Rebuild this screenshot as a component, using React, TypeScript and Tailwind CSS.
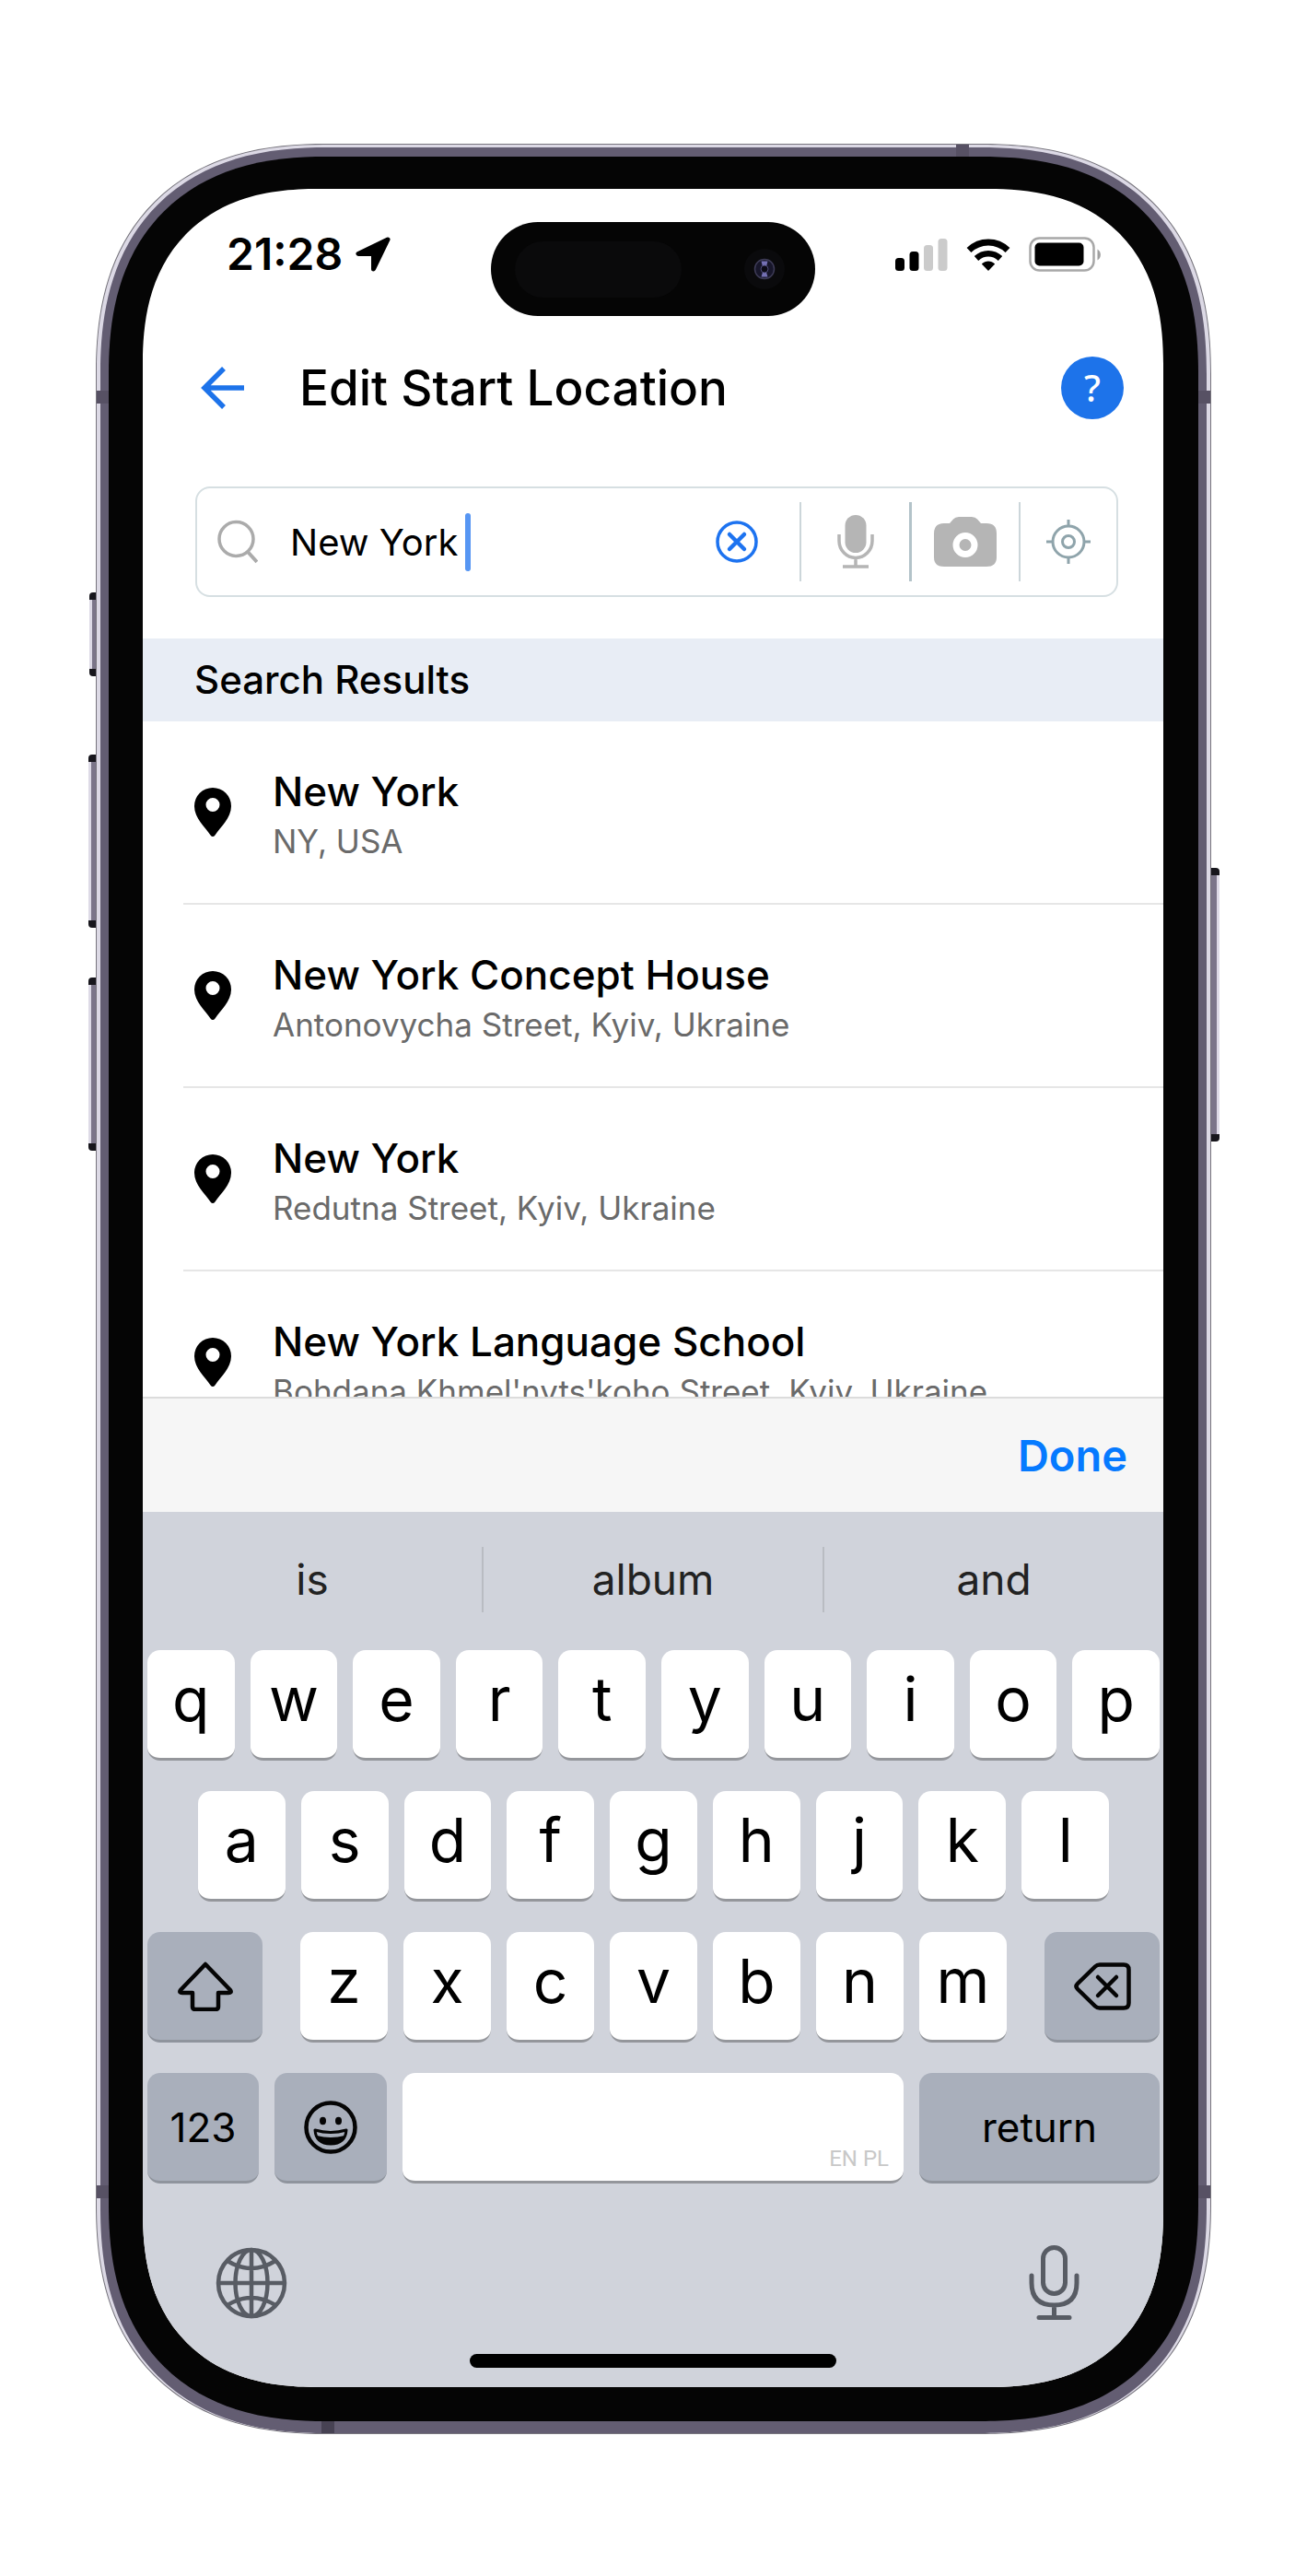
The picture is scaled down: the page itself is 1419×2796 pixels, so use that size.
import React from "react";

const results = [
  { title: "New York", address: "NY, USA" },
  { title: "New York Concept House", address: "Antonovycha Street, Kyiv, Ukraine" },
  { title: "New York", address: "Redutna Street, Kyiv, Ukraine" },
  { title: "New York Language School", address: "Bohdana Khmel'nyts'koho Street, Kyiv, Ukraine" },
];

const whiteKey =
  "flex h-[120px] items-center justify-center rounded-[14px] border-b-[3px] border-[#94969b] bg-white pb-3 text-[66px] leading-none text-black";
const grayKey =
  "flex h-[120px] items-center justify-center rounded-[14px] border-b-[3px] border-[#8f949d] bg-[#a9afbb] text-[44px] leading-none text-black";

function LetterKeys({ letters }: { letters: string }) {
  return (
    <>
      {letters.split("").map((letter) => (
        <button key={letter} type="button" className={`${whiteKey} min-w-0 flex-1`}>
          {letter}
        </button>
      ))}
    </>
  );
}

function StatusIcons() {
  return (
    <div className="flex items-center">
      <svg width="57" height="37" viewBox="0 0 57 37" aria-label="Signal">
        <rect x="0" y="22" width="10" height="14" rx="3.5" fill="#000" />
        <rect x="15.500" y="15" width="10" height="21" rx="3.500" fill="#000" />
        <rect x="31" y="8" width="10" height="28" rx="3.500" fill="#cbcbcb" />
        <rect x="46.500" y="1" width="10" height="35" rx="3.500" fill="#cbcbcb" />
      </svg>
      <svg className="ml-5" width="48" height="37" viewBox="0 0 48 37" aria-label="Wi-Fi">
        <path d="M3 13.500C15 2.200 33 2.200 45 13.500" fill="none" stroke="#000" strokeWidth="7" />
        <path d="M11 22.500C18.500 15.500 29.500 15.500 37 22.500" fill="none" stroke="#000" strokeWidth="6.500" />
        <path d="M16.800 28.500C21 24.600 27 24.600 31.200 28.500L24 36Z" fill="#000" />
      </svg>
      <svg className="ml-5" width="79" height="38" viewBox="0 0 79 38" aria-label="Battery">
        <rect x="1.500" y="1.500" width="69" height="35" rx="10" fill="#fff" stroke="#a8a8a8" strokeWidth="2.500" />
        <rect x="6.500" y="6.500" width="53" height="25" rx="5" fill="#000" />
        <path d="M74.500 13.500C79 16 79 23 74.500 25.500Z" fill="#a0a0a0" />
      </svg>
    </div>
  );
}

function StatusBar() {
  return (
    <div className="grid h-[102px] grid-cols-[1fr_352px_1fr]">
      <div className="flex h-[70px] items-center pl-[91px]">
        <span className="text-[48px] font-semibold leading-none">21:28</span>
        <svg className="ml-[14px]" width="38" height="38" viewBox="0 0 38 38" aria-label="Location in use">
          <path d="M35 3L3 18.500H19.500V35Z" fill="#000" stroke="#000" strokeWidth="5" strokeLinejoin="round" />
        </svg>
      </div>
      <div className="flex items-center justify-between rounded-full bg-[#050505] pl-[26px] pr-[33px]">
        <div className="h-[61px] w-[181px] rounded-full bg-[#0a0a0b]" />
        <svg width="44" height="44" viewBox="0 0 44 44" aria-hidden="true">
          <circle cx="22" cy="22" r="22" fill="#0a0a0c" />
          <circle cx="22" cy="22" r="10.500" fill="#17162a" stroke="#3d3b56" strokeWidth="1.500" />
          <path d="M18.500 13.500h7l-1.500 6h-4ZM18.500 30.500h7l-1.500-5h-4Z" fill="#7470b4" />
          <circle cx="22" cy="22" r="4" fill="#0b0a14" stroke="#4d4a78" />
        </svg>
      </div>
      <div className="flex h-[70px] items-center justify-end pr-[67px]">
        <StatusIcons />
      </div>
    </div>
  );
}

function Header() {
  return (
    <header className="flex h-[156px] items-center pl-[63px] pr-[43px]">
      <button type="button" aria-label="Back">
        <svg width="48" height="46" viewBox="0 0 48 46" fill="none" stroke="#1d73ea" strokeWidth="5.500">
          <path d="M47 23H4M25 2L4 23L25 44" />
        </svg>
      </button>
      <h1 className="ml-[59px] text-[53px] font-medium leading-none">Edit Start Location</h1>
      <button
        type="button"
        aria-label="Help"
        className="ml-auto flex size-[68px] items-center justify-center rounded-full bg-[#1d73ea] font-['Noto_Sans'] text-[40px] font-medium leading-none text-white"
      >
        ?
      </button>
    </header>
  );
}

function SearchBox() {
  return (
    <div className="ml-[57px] mr-[49px] mt-[29px] flex h-[120px] items-center rounded-2xl border-2 border-[#d6dfe2] pl-[22px]">
      <svg width="44" height="50" viewBox="0 0 44 50" fill="none" stroke="#ababab" strokeWidth="3.500" aria-hidden="true">
        <circle cx="20.500" cy="22" r="18.500" />
        <path d="M33 36L43 47" strokeWidth="4" />
      </svg>
      <input
        type="text"
        aria-label="Search location"
        defaultValue="New York"
        className="ml-[35px] w-[190px] bg-transparent text-[40px] leading-none outline-none"
      />
      <span className="h-[63px] w-[6px] rounded-full bg-[#5796f3]" />
      <button type="button" aria-label="Clear" className="ml-auto mr-[45px]">
        <svg width="46" height="46" viewBox="0 0 46 46" fill="none" stroke="#1d73f0" strokeWidth="3.500">
          <circle cx="23" cy="23" r="21" />
          <path d="M15 15L31 31M31 15L15 31" strokeWidth="4.500" strokeLinecap="round" />
        </svg>
      </button>
      <span className="h-[86px] w-[2px] bg-[#ccd6da]" />
      <button type="button" aria-label="Voice search" className="flex w-[117px] justify-center">
        <svg width="40" height="58" viewBox="0 0 40 58" fill="none" stroke="#b5b5b5" strokeWidth="3.500">
          <rect x="8.500" y="0" width="23" height="41" rx="11.500" fill="#b5b5b5" stroke="none" />
          <path d="M2 21V28A18 18.500 0 0 0 38 28V21M20 46V56M6 56H34" />
        </svg>
      </button>
      <span className="h-[86px] w-[3px] bg-[#b3c3c9]" />
      <button type="button" aria-label="Camera search" className="flex w-[116px] justify-center">
        <svg width="68" height="54" viewBox="0 0 68 54">
          <path
            d="M11 7H17L21 2.500Q23 0 27 0H41Q45 0 47 2.500L51 7H57Q68 7 68 18V44Q68 54 57 54H11Q0 54 0 44V18Q0 7 11 7Z"
            fill="#b5b5b5"
          />
          <circle cx="34" cy="30.500" r="10" fill="none" stroke="#fff" strokeWidth="7" />
        </svg>
      </button>
      <span className="h-[86px] w-[2px] bg-[#ccd6da]" />
      <button type="button" aria-label="Use my location" className="flex w-[104px] flex-none justify-center">
        <svg width="48" height="48" viewBox="0 0 48 48" fill="none" stroke="#8fa4ab" strokeWidth="3">
          <circle cx="24" cy="24" r="17" />
          <circle cx="24" cy="24" r="6.500" />
          <path d="M24 0V8M24 40V48M0 24H8M40 24H48" />
        </svg>
      </button>
    </div>
  );
}

function Results() {
  return (
    <section aria-label="Search Results">
      <h2 className="mt-[45px] flex h-[90px] items-center bg-[#e8edf5] pl-[56px] text-[42px] font-medium leading-none">
        Search Results
      </h2>
      <ul className="h-[733px] overflow-hidden">
        {results.map((item) => (
          <li key={item.address} className="ml-[44px] border-b-2 border-[#e6e6e6]">
            <a href="#result" className="flex h-[197px] items-center pl-[12px]">
              <svg width="40" height="53" viewBox="0 0 40 53" fill="#000" aria-hidden="true">
                <path
                  fillRule="evenodd"
                  d="M20 0A20 20 0 0 0 0 20C0 33 12 43 17.500 51.500Q20 54.500 22.500 51.500C28 43 40 33 40 20A20 20 0 0 0 20 0ZM20 11A7.500 7.500 0 1 1 20 26A7.500 7.500 0 1 1 20 11Z"
                />
              </svg>
              <span className="ml-[45px] flex flex-col gap-2 whitespace-nowrap pt-[6px]">
                <span className="text-[44px] font-medium leading-[48px]">{item.title}</span>
                <span className="text-[35px] leading-[44px] text-[#6a6a6a]">{item.address}</span>
              </span>
            </a>
          </li>
        ))}
      </ul>
    </section>
  );
}

function Keyboard() {
  return (
    <div className="bg-[#d0d3db] text-black">
      <div className="flex h-[150px] items-center pb-[4px] text-[46px] leading-none text-[#222]">
        <button type="button" className="flex-1">is</button>
        <span className="h-[71px] w-[2px] bg-[#b9bcc2]" />
        <button type="button" className="flex-1">album</button>
        <span className="h-[71px] w-[2px] bg-[#b9bcc2]" />
        <button type="button" className="flex-1">and</button>
      </div>
      <div className="flex flex-col gap-[33px] pl-[5px] pr-[4px]">
        <div className="flex gap-[17px]">
          <LetterKeys letters="qwertyuiop" />
        </div>
        <div className="flex gap-[17px] px-[55px]">
          <LetterKeys letters="asdfghjkl" />
        </div>
        <div className="flex">
          <button type="button" aria-label="Shift" className={`${grayKey} w-[125px]`}>
            <svg width="62" height="54" viewBox="0 0 62 54" fill="none" stroke="#050505" strokeWidth="4.500" strokeLinejoin="round">
              <path d="M31 3L58 31Q60 34 56 34H45V49Q45 52 42 52H20Q17 52 17 49V34H6Q2 34 4 31Z" />
            </svg>
          </button>
          <div className="mx-[41px] flex flex-1 gap-[17px]">
            <LetterKeys letters="zxcvbnm" />
          </div>
          <button type="button" aria-label="Delete" className={`${grayKey} w-[125px]`}>
            <svg width="62" height="52" viewBox="0 0 62 52" fill="none" stroke="#050505" strokeWidth="4.500" strokeLinejoin="round" strokeLinecap="round">
              <path d="M28 2.500H54Q59.500 2.500 59.500 8V44Q59.500 49.500 54 49.500H28Q25 49.500 23 47.500L4 29Q1 26 4 23L23 4.500Q25 2.500 28 2.500Z" />
              <path d="M26 16L46 36M46 16L26 36" />
            </svg>
          </button>
        </div>
        <div className="flex gap-[17px]">
          <button type="button" className={`${grayKey} w-[121px]`}>123</button>
          <button type="button" aria-label="Emoji" className={`${grayKey} w-[122px]`}>
            <svg width="58" height="58" viewBox="0 0 58 58" fill="none" stroke="#050505">
              <circle cx="29" cy="29" r="26.500" strokeWidth="4.500" />
              <ellipse cx="20.500" cy="22" rx="3.500" ry="4.200" fill="#050505" stroke="none" />
              <ellipse cx="37.500" cy="22" rx="3.500" ry="4.200" fill="#050505" stroke="none" />
              <path d="M12 32Q29 37 46 32Q45 47 29 47Q13 47 12 32Z" strokeWidth="3" strokeLinejoin="round" />
              <path d="M14 38Q29 42 44 38Q41 47 29 47Q17 47 14 38Z" fill="#050505" stroke="none" />
            </svg>
          </button>
          <button
            type="button"
            aria-label="Space"
            className="flex h-[120px] flex-1 items-end justify-end rounded-[14px] border-b-[3px] border-[#94969b] bg-white pb-[12px] pr-[16px] font-['Roboto','Liberation_Sans',sans-serif] text-[24px] leading-none text-[#c8c8c8]"
          >
            EN PL
          </button>
          <button type="button" className={`${grayKey} w-[261px]`}>return</button>
        </div>
      </div>
      <div className="flex items-center justify-between pl-[79px] pr-[91px] pt-[67px]">
        <button type="button" aria-label="Next keyboard">
          <svg width="78" height="78" viewBox="0 0 78 78" fill="none" stroke="#585c64" strokeWidth="4.500">
            <circle cx="39" cy="39" r="36" />
            <ellipse cx="39" cy="39" rx="17.500" ry="36" />
            <path d="M39 2V76M2 39H76M13 15Q39 31 65 15M13 63Q39 47 65 63" />
          </svg>
        </button>
        <button type="button" aria-label="Dictate">
          <svg width="55" height="81" viewBox="0 0 55 81" fill="none" stroke="#585c64" strokeWidth="5" strokeLinecap="round">
            <rect x="15.500" y="2.500" width="24" height="50" rx="12" />
            <path d="M3 33V41Q3 65 27.500 65Q52 65 52 41V33M27.500 65V78M11 78.500H44" />
          </svg>
        </button>
      </div>
      <div className="pb-[21px] pt-[37px]">
        <div className="mx-auto h-[15px] w-[398px] rounded-full bg-black" />
      </div>
    </div>
  );
}

function SideButton({ place }: { place: string }) {
  return (
    <span className={`absolute -z-10 flex border-y-[8px] border-[#17161c] bg-[#7b7589] ${place}`}>
      <span className="h-full w-[3px] bg-[#dddae6]" />
    </span>
  );
}

export default function App() {
  return (
    <main className="bg-white px-[104px] pb-[154px] pt-[156px] font-['Inter','Liberation_Sans',sans-serif] text-black">
      <div className="relative isolate">
        <SideButton place="-left-[7px] top-[487px] h-[91px] w-[9px] rounded-l-[4px]" />
        <SideButton place="-left-[8px] top-[663px] h-[188px] w-[10px] rounded-l-[4px]" />
        <SideButton place="-left-[8px] top-[905px] h-[188px] w-[10px] rounded-l-[4px]" />
        <SideButton place="-right-[9px] top-[786px] h-[297px] w-[11px] justify-end rounded-r-[4px]" />
        <div className="relative overflow-hidden rounded-[213px] border border-[#77757d] bg-[#dcd9e5] px-[4px] pt-[3px] supports-[corner-shape:squircle]:rounded-[250px] supports-[corner-shape:squircle]:[corner-shape:superellipse(1.25)]">
          <div className="rounded-[209px] bg-[#635d72] px-[9px] pb-[13px] pt-[10px] supports-[corner-shape:squircle]:rounded-[246px] supports-[corner-shape:squircle]:[corner-shape:superellipse(1.25)]">
            <div className="rounded-[200px] bg-[#050505] pb-[37px] pl-[37px] pr-[38px] pt-[35px] supports-[corner-shape:squircle]:rounded-[236px] supports-[corner-shape:squircle]:[corner-shape:superellipse(1.25)]">
              <div className="overflow-hidden rounded-[160px] bg-white pt-[36px] supports-[corner-shape:squircle]:rounded-[190px] supports-[corner-shape:squircle]:[corner-shape:superellipse(1.25)]">
                <StatusBar />
                <Header />
                <SearchBox />
                <Results />
                <div className="flex h-[125px] items-center justify-end border-t-2 border-[#dcdcdc] bg-[#f6f6f6] pr-[39px]">
                  <button type="button" className="text-[47px] font-semibold leading-none text-[#067aff]">
                    Done
                  </button>
                </div>
                <Keyboard />
              </div>
            </div>
          </div>
          <span className="absolute right-[262px] top-0 h-[13px] w-[14px] bg-[#575164]" />
          <span className="absolute left-0 top-[267px] h-[14px] w-[13px] bg-[#575164]" />
          <span className="absolute right-0 top-[267px] h-[14px] w-[13px] bg-[#575164]" />
          <span className="absolute bottom-[255px] left-0 h-[14px] w-[13px] bg-[#575164]" />
          <span className="absolute bottom-[255px] right-0 h-[14px] w-[13px] bg-[#575164]" />
          <span className="absolute bottom-0 left-[244px] h-[13px] w-[14px] bg-[#474253]" />
        </div>
      </div>
    </main>
  );
}
